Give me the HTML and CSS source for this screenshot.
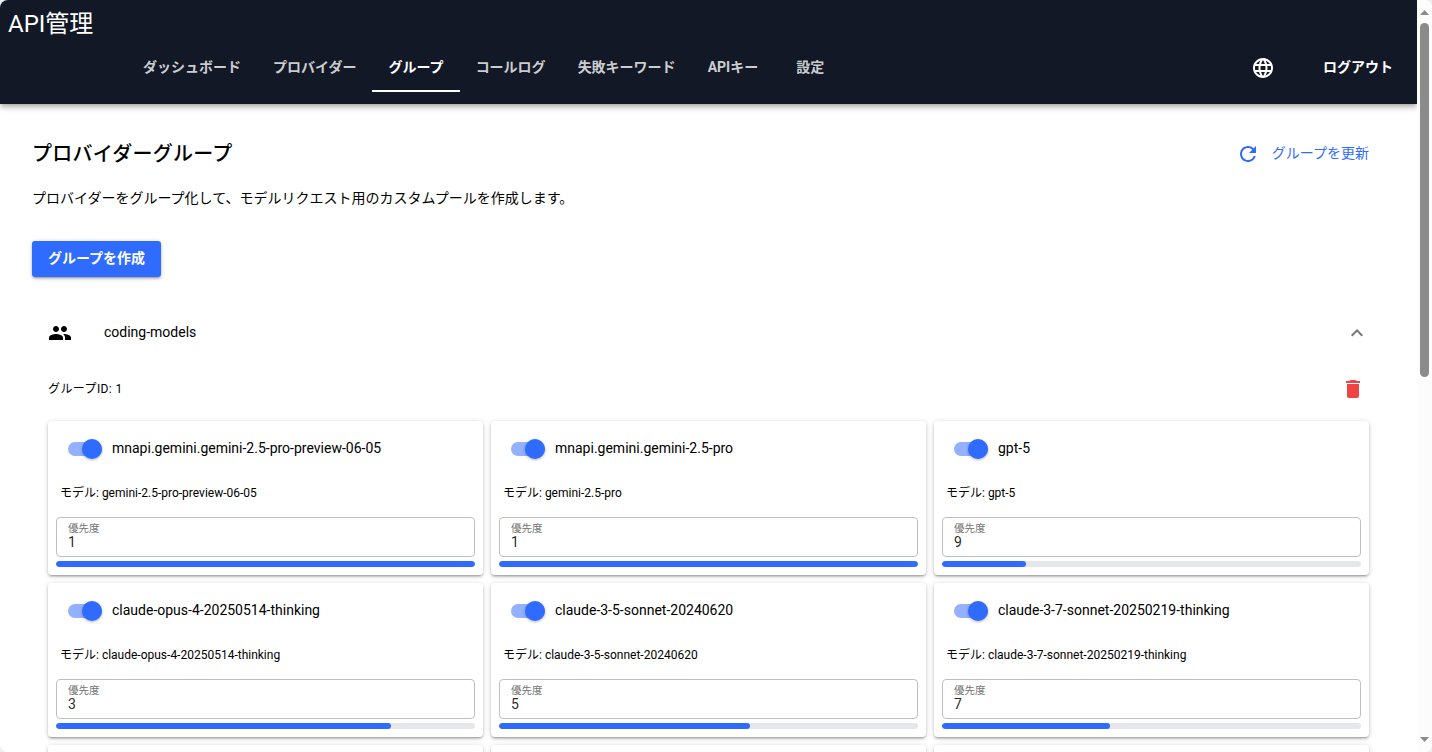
FILE: index.html
```
<!DOCTYPE html>
<html lang="ja">
<head>
<meta charset="utf-8">
<title>API管理</title>
<link rel="stylesheet" href="styles.css">
</head>
<body>
<div class="window">
  <div class="page">
    <header class="header">
      <div class="brand">API管理</div>
      <div class="toolbar">
        <nav class="tabs">
          <a class="tab">ダッシュボード</a>
          <a class="tab">プロバイダー</a>
          <a class="tab active">グループ</a>
          <a class="tab">コールログ</a>
          <a class="tab">失敗キーワード</a>
          <a class="tab">APIキー</a>
          <a class="tab">設定</a>
        </nav>
        <div class="actions">
          <svg class="icon" viewBox="0 0 24 24"><path d="M11.99 2C6.47 2 2 6.48 2 12s4.47 10 9.99 10C17.52 22 22 17.52 22 12S17.52 2 11.99 2zm6.93 6h-2.95a15.65 15.65 0 0 0-1.38-3.56A8.03 8.03 0 0 1 18.92 8zM12 4.04c.83 1.2 1.48 2.53 1.91 3.96h-3.82c.43-1.43 1.08-2.76 1.91-3.96zM4.26 14C4.1 13.36 4 12.69 4 12s.1-1.36.26-2h3.38c-.08.66-.14 1.32-.14 2s.06 1.34.14 2H4.26zm.82 2h2.95c.32 1.25.78 2.45 1.38 3.56A7.987 7.987 0 0 1 5.08 16zm2.95-8H5.08a7.987 7.987 0 0 1 4.33-3.56A15.65 15.65 0 0 0 8.03 8zM12 19.96c-.83-1.2-1.48-2.53-1.91-3.96h3.82c-.43 1.43-1.08 2.76-1.91 3.96zM14.34 14H9.66c-.09-.66-.16-1.32-.16-2s.07-1.35.16-2h4.68c.09.65.16 1.32.16 2s-.07 1.34-.16 2zm.25 5.56c.6-1.11 1.06-2.31 1.38-3.56h2.95a8.03 8.03 0 0 1-4.33 3.56zM16.36 14c.08-.66.14-1.32.14-2s-.06-1.34-.14-2h3.38c.16.64.26 1.31.26 2s-.1 1.36-.26 2h-3.38z"/></svg>
          <span>ログアウト</span>
        </div>
      </div>
    </header>
    <main class="main">
      <div class="title-row">
        <h1>プロバイダーグループ</h1>
        <div class="refresh">
          <svg class="icon" viewBox="0 0 24 24"><path d="M17.65 6.35A7.958 7.958 0 0 0 12 4c-4.42 0-7.99 3.58-7.99 8s3.57 8 7.99 8c3.73 0 6.84-2.55 7.73-6h-2.08A5.99 5.99 0 0 1 12 18c-3.31 0-6-2.69-6-6s2.69-6 6-6c1.66 0 3.14.69 4.22 1.78L13 11h7V4l-2.35 2.35z"/></svg>
          <span>グループを更新</span>
        </div>
      </div>
      <p class="lead">プロバイダーをグループ化して、モデルリクエスト用のカスタムプールを作成します。</p>
      <button class="create">グループを作成</button>
      <section class="group">
        <div class="group-head">
          <svg class="icon" viewBox="0 0 24 24"><path d="M16 11c1.66 0 2.99-1.34 2.99-3S17.66 5 16 5s-3 1.34-3 3 1.34 3 3 3zm-8 0c1.66 0 2.99-1.34 2.99-3S9.66 5 8 5 5 6.34 5 8s1.34 3 3 3zm0 2c-2.33 0-7 1.17-7 3.5V19h14v-2.5c0-2.33-4.67-3.5-7-3.5zm8 0c-.29 0-.62.02-.97.05 1.16.84 1.97 1.97 1.97 3.45V19h6v-2.5c0-2.33-4.67-3.5-7-3.5z"/></svg>
          <span class="group-name">coding-models</span>
          <svg class="icon chevron" viewBox="0 0 24 24"><path d="M12 8l-6 6 1.41 1.41L12 10.83l4.59 4.58L18 14z"/></svg>
        </div>
        <div class="group-meta">
          <span>グループID: 1</span>
          <svg class="icon trash" viewBox="0 0 24 24"><path d="M6 19c0 1.1.9 2 2 2h8c1.1 0 2-.9 2-2V7H6v12zM19 4h-3.5l-1-1h-5l-1 1H5v2h14V4z"/></svg>
        </div>
        <div class="cards">
          <article class="card">
            <div class="card-head"><i class="toggle"></i>mnapi.gemini.gemini-2.5-pro-preview-06-05</div>
            <div class="model">モデル: gemini-2.5-pro-preview-06-05</div>
            <div class="field"><label>優先度</label><span>1</span></div>
            <div class="bar"><div class="fill" style="width:100%"></div></div>
          </article>
          <article class="card">
            <div class="card-head"><i class="toggle"></i>mnapi.gemini.gemini-2.5-pro</div>
            <div class="model">モデル: gemini-2.5-pro</div>
            <div class="field"><label>優先度</label><span>1</span></div>
            <div class="bar"><div class="fill" style="width:100%"></div></div>
          </article>
          <article class="card">
            <div class="card-head"><i class="toggle"></i>gpt-5</div>
            <div class="model">モデル: gpt-5</div>
            <div class="field"><label>優先度</label><span>9</span></div>
            <div class="bar"><div class="fill" style="width:20%"></div></div>
          </article>
          <article class="card">
            <div class="card-head"><i class="toggle"></i>claude-opus-4-20250514-thinking</div>
            <div class="model">モデル: claude-opus-4-20250514-thinking</div>
            <div class="field"><label>優先度</label><span>3</span></div>
            <div class="bar"><div class="fill" style="width:80%"></div></div>
          </article>
          <article class="card">
            <div class="card-head"><i class="toggle"></i>claude-3-5-sonnet-20240620</div>
            <div class="model">モデル: claude-3-5-sonnet-20240620</div>
            <div class="field"><label>優先度</label><span>5</span></div>
            <div class="bar"><div class="fill" style="width:60%"></div></div>
          </article>
          <article class="card">
            <div class="card-head"><i class="toggle"></i>claude-3-7-sonnet-20250219-thinking</div>
            <div class="model">モデル: claude-3-7-sonnet-20250219-thinking</div>
            <div class="field"><label>優先度</label><span>7</span></div>
            <div class="bar"><div class="fill" style="width:40%"></div></div>
          </article>
          <article class="card"></article>
          <article class="card"></article>
          <article class="card"></article>
        </div>
      </section>
    </main>
  </div>
  <div class="scrollbar">
    <svg class="arrow" viewBox="0 0 9 5"><path d="M4.5 0L9 5H0z"/></svg>
    <div class="thumb"></div>
    <svg class="arrow" viewBox="0 0 9 5"><path d="M0 0h9L4.5 5z"/></svg>
  </div>
</div>
</body>
</html>
```
FILE: styles.css
```
* { box-sizing: border-box; }
body {
  margin: 0;
  background: #eef0f0;
  font-family: Roboto, "Noto Sans CJK JP", sans-serif;
  font-size: 14px;
  line-height: 20px;
  color: #000;
}
.window {
  display: flex;
  width: 1432px;
  height: 752px;
  overflow: hidden;
  border-radius: 8px;
  background: #fff;
}
.page { width: 1417px; height: 752px; overflow: hidden; }
.icon { display: block; width: 24px; height: 24px; fill: currentColor; flex: none; }

.header {
  height: 104px;
  background: #121826;
  color: #fff;
  box-shadow: 0 2px 4px -1px rgba(0,0,0,.2), 0 4px 5px rgba(0,0,0,.14), 0 1px 10px rgba(0,0,0,.12);
}
.brand { height: 44px; padding: 8px 8px 0; font-size: 24px; line-height: 32px; }
.toolbar { display: flex; justify-content: space-between; height: 48px; padding: 0 24px 0 127px; }
.tabs { display: flex; }
.tab {
  min-width: 72px;
  height: 48px;
  padding: 0 16px;
  border-bottom: 2px solid transparent;
  font-weight: 700;
  line-height: 46px;
  text-align: center;
  color: rgba(255,255,255,.8);
}
.tab.active { color: #fff; border-color: #fff; }
.actions { display: flex; align-items: center; gap: 48px; font-weight: 700; }
.actions span { padding-bottom: 2px; }

.main { padding: 32px; }
.title-row { display: flex; justify-content: space-between; align-items: center; height: 36px; padding-right: 16px; }
h1 { margin: 0; font-size: 20px; font-weight: 500; line-height: 32px; letter-spacing: .25px; }
.refresh { display: flex; gap: 12px; align-items: center; color: #2f6bff; font-weight: 400; }
.refresh span { padding-bottom: 2px; }
.lead { margin: 16px 0 33px; }
.create {
  display: block;
  width: 129px;
  height: 36px;
  padding: 0 0 2px;
  border: 0;
  border-radius: 3px;
  background: #2f6bff;
  color: #fff;
  font: 700 14px/20px Roboto, "Noto Sans CJK JP", sans-serif;
  box-shadow: 0 1px 5px rgba(0,0,0,.2), 0 2px 2px rgba(0,0,0,.14), 0 3px 1px -2px rgba(0,0,0,.12);
}
.group { padding: 32px 16px 0; }
.group-head { display: flex; align-items: center; height: 48px; }
.group-name { flex: 1; padding: 0 0 2px 32px; }
.chevron { color: #757575; }
.group-meta { display: flex; align-items: center; justify-content: space-between; height: 64px; padding-right: 4px; font-size: 12px; letter-spacing: .4px; }
.trash { color: #f04444; }
.cards { display: grid; grid-template-columns: repeat(3, 1fr); gap: 8px; }
.card {
  height: 154px;
  padding: 8px;
  border-radius: 4px;
  background: #fff;
  box-shadow: 0 1px 5px rgba(0,0,0,.2), 0 2px 2px rgba(0,0,0,.14), 0 3px 1px -2px rgba(0,0,0,.12);
}
.card-head { display: flex; align-items: center; gap: 10px; height: 40px; padding-left: 12px; padding-bottom: 2px; }
.toggle {
  display: flex;
  align-items: center;
  justify-content: flex-end;
  width: 34px;
  height: 14px;
  margin-top: 2px;
  border-radius: 7px;
  background: #93b1ff;
}
.toggle::after {
  content: "";
  flex: none;
  width: 20px;
  height: 20px;
  border-radius: 50%;
  background: #2f6bff;
  box-shadow: 0 1px 3px rgba(0,0,0,.3);
}
.model { height: 48px; padding: 14px 4px 0; font-size: 12px; line-height: 20px; }
.field {
  display: flex;
  flex-direction: column;
  height: 40px;
  padding: 4px 11px 0;
  border: 1px solid #bfbfbf;
  border-radius: 4px;
  color: rgba(0,0,0,.87);
}
.field label { font-size: 10.5px; line-height: 14px; color: #757575; }
.field span { line-height: 12px; }
.bar { height: 6px; margin-top: 4px; border-radius: 3px; background: #e5e7eb; overflow: hidden; }
.fill { height: 6px; border-radius: 3px; background: #2f6bff; }

.scrollbar {
  display: flex;
  flex-direction: column;
  align-items: center;
  width: 15px;
  height: 752px;
  padding: 10px 0;
  background: #fcfcfc;
}
.arrow { width: 9px; height: 5px; fill: #8b8b8b; flex: none; }
.thumb { width: 9px; height: 354px; margin: 8px 0 auto; border-radius: 5px; background: #8b8b8b; }
```
